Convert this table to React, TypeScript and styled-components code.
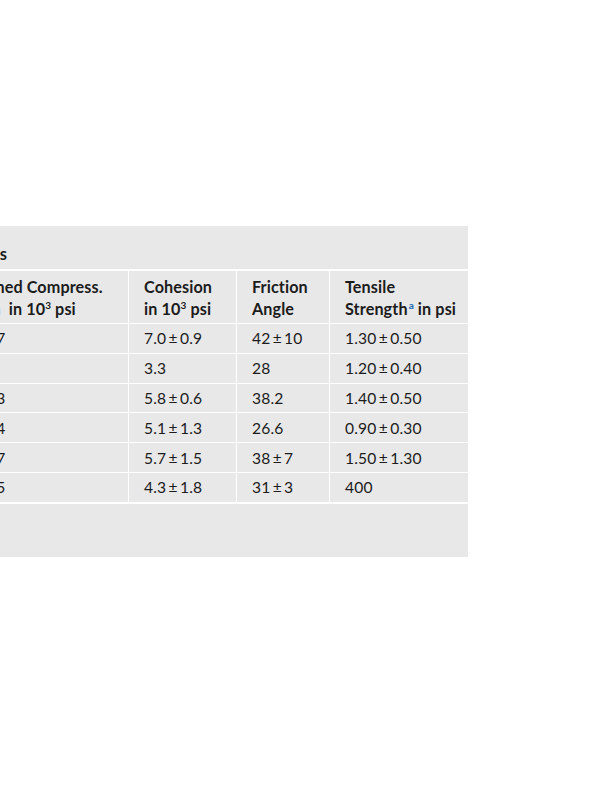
import React from 'react';
import styled, { createGlobalStyle } from 'styled-components';

const GlobalStyle = createGlobalStyle`
  html, body {
    margin: 0;
    padding: 0;
    background: #ffffff;
  }
  body {
    font-family: Lato, 'Open Sans', sans-serif;
    color: #1c1c1c;
  }
`;

const Frame = styled.div`
  margin: 226px 0 0 -77px;
  width: 545px;
  display: flex;
  flex-direction: column;
  gap: 2px;
  background: #ffffff;
`;

const Caption = styled.div`
  height: 43px;
  box-sizing: border-box;
  padding: 12px 461px 0 15px;
  display: flex;
  align-items: center;
  justify-content: flex-end;
  background: #e8e8e8;
  font-size: 16.5px;
  font-weight: 700;
  white-space: nowrap;
`;

const Grid = styled.div`
  display: grid;
  grid-template-columns: 205px 107px 92px 138px;
  grid-template-rows: 52px repeat(6, 28.8px);
  gap: 1px;
  background: #ffffff;
`;

const Cell = styled.div<{ $head?: boolean }>`
  background: #e8e8e8;
  padding: ${(p) => (p.$head ? '2px 0 0 15px' : '0 0 0 15px')};
  display: flex;
  align-items: center;
  font-size: ${(p) => (p.$head ? '16.2px' : '15.6px')};
  font-weight: ${(p) => (p.$head ? 700 : 400)};
  line-height: ${(p) => (p.$head ? '22px' : '18px')};
  letter-spacing: ${(p) => (p.$head ? '0.1px' : '0.2px')};
  white-space: nowrap;
  overflow: hidden;

  sup {
    font-size: 10px;
    line-height: 0;
    vertical-align: 6px;
  }
`;

const Note = styled.sup`
  color: #2e6fb6;
  font-weight: 900;
  margin: 0 4px 0 1px;
`;

const Footer = styled.div`
  height: 53px;
  background: #e8e8e8;
`;

const pm = '\u2009±\u2009';

const rows = [
  [`25.1${pm}2.7`, `7.0${pm}0.9`, `42${pm}10`, `1.30${pm}0.50`],
  ['', '3.3', '28', `1.20${pm}0.40`],
  [`22.0${pm}4.3`, `5.8${pm}0.6`, '38.2', `1.40${pm}0.50`],
  [`16.7${pm}3.4`, `5.1${pm}1.3`, '26.6', `0.90${pm}0.30`],
  [`21.3${pm}5.7`, `5.7${pm}1.5`, `38${pm}7`, `1.50${pm}1.30`],
  [`14.2${pm}2.5`, `4.3${pm}1.8`, `31${pm}3`, '400'],
];

export default function App() {
  return (
    <>
      <GlobalStyle />
      <Frame>
        <Caption>Strength Properties of Rocks</Caption>
        <Grid>
          <Cell $head>
            <div>
              Unconfined Compress.
              <br />
              Strength&nbsp; in 10<sup>3</sup> psi
            </div>
          </Cell>
          <Cell $head>
            <div>
              Cohesion
              <br />
              in 10<sup>3</sup> psi
            </div>
          </Cell>
          <Cell $head>
            <div>
              Friction
              <br />
              Angle
            </div>
          </Cell>
          <Cell $head>
            <div>
              Tensile
              <br />
              Strength<Note>a</Note>in psi
            </div>
          </Cell>
          {rows.map((r, i) =>
            r.map((v, j) => <Cell key={`${i}-${j}`}>{v}</Cell>),
          )}
        </Grid>
        <Footer />
      </Frame>
    </>
  );
}
